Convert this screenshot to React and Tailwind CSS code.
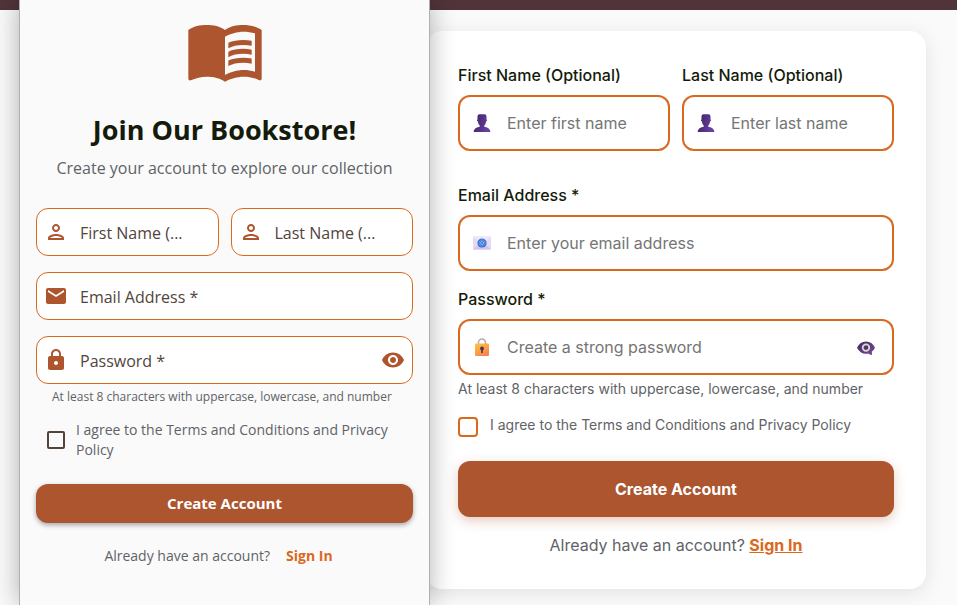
import React from "react";
import {
  MdMenuBook,
  MdOutlinePerson,
  MdEmail,
  MdLock,
  MdVisibility,
} from "react-icons/md";

function PersonEmoji() {
  return (
    <svg viewBox="0 0 18 18" className="size-[18px]" aria-hidden="true">
      <defs>
        <linearGradient id="bust" x1="0" x2="1" y1="0" y2="0.3">
          <stop offset="0" stopColor="#38225f" />
          <stop offset="1" stopColor="#6a3fa3" />
        </linearGradient>
      </defs>
      <path
        fill="url(#bust)"
        d="M4.500 2.200Q4.500.2 6.500.2h5q2 0 2 2v3.300q.6.2.5.900t-.8.900q-.3 2.700-1.900 4.300v1.100l2.800.800q2.900 1 3.300 4.500H.600q.4-3.500 3.300-4.500l2.800-.800v-1.100Q5.100 10 4.800 7.300q-.7-.2-.8-.9t.5-.9z"
      />
    </svg>
  );
}

function MailEmoji() {
  return (
    <svg viewBox="0 0 18 18" className="size-[18px]" aria-hidden="true">
      <path fill="#e6d9f3" d="M0 2.500h18v13H0z" />
      <path fill="#d3c3e6" d="M0 15.500 7 9h4l7 6.500z" />
      <path fill="#efe6f8" d="M0 2.500h18L9 11z" />
      <circle cx="9" cy="9" r="4.600" fill="#3474d4" />
      <circle cx="9" cy="9" r="1.500" fill="none" stroke="#a6c6f4" strokeWidth="0.800" />
      <path
        d="M10.600 7.500v2.200q.2 1 1 .5.700-.8.300-2A3 3 0 1 0 10.500 11.600"
        fill="none"
        stroke="#86b0ee"
        strokeWidth="0.600"
      />
    </svg>
  );
}

function LockEmoji() {
  return (
    <svg viewBox="0 0 18 18" className="size-[18px]" aria-hidden="true">
      <defs>
        <linearGradient id="padlock" x1="0" x2="0.600" y1="0" y2="1">
          <stop offset="0" stopColor="#fdc93c" />
          <stop offset="1" stopColor="#f9834f" />
        </linearGradient>
      </defs>
      <path
        d="M5.500 7V4.500a3.500 3.500 0 0 1 7 0V7"
        fill="none"
        stroke="#b3a8bd"
        strokeWidth="1.500"
      />
      <rect x="2" y="5.500" width="14" height="12.500" rx="1" fill="url(#padlock)" />
      <circle cx="9" cy="10.500" r="1.900" fill="#4a3358" />
      <path fill="#4a3358" d="M8.200 10.500h1.600v4.500H8.200z" />
    </svg>
  );
}

function EyeEmoji() {
  return (
    <svg viewBox="0 0 18 18" className="size-[18px]" aria-hidden="true">
      <defs>
        <linearGradient id="eye" x1="0" x2="1" y1="0" y2="1">
          <stop offset="0" stopColor="#412961" />
          <stop offset="1" stopColor="#7b4b9a" />
        </linearGradient>
      </defs>
      <path
        fill="url(#eye)"
        d="M0 9.800Q3 3.500 9 3.500t9 6.300q-1.200 2.500-3.200 3.900l.3 3.400q-2.500-.2-3.900-1.500-1 .2-2.200.2-6 0-9-6z"
      />
      <circle cx="9" cy="9.600" r="3.300" fill="#4a4048" stroke="#ddd6e2" strokeWidth="1.800" />
    </svg>
  );
}

function MobileField({ icon: Icon, label, type = "text", children }) {
  return (
    <div className="flex h-12 min-w-0 flex-1 items-center rounded-xl border border-[#da681d] bg-white px-[7px] text-[#ad552f]">
      <Icon size={24} className="shrink-0" />
      <input
        type={type}
        aria-label={label}
        placeholder={label}
        className="ml-3 w-full min-w-0 flex-1 bg-transparent pt-0.5 text-base text-[#52443c] outline-none placeholder:text-[#52443c]"
      />
      {children}
    </div>
  );
}

function WebField({ id, label, icon, placeholder, type = "text", children }) {
  return (
    <div className="min-w-0 flex-1">
      <label htmlFor={id} className="mb-2 block text-base font-medium text-[#141b0b]">
        {label}
      </label>
      <div className="flex h-14 items-center gap-4 rounded-xl border-2 border-[#da681d] bg-white px-[13px]">
        <span className="shrink-0">{icon}</span>
        <input
          id={id}
          type={type}
          placeholder={placeholder}
          className="w-full min-w-0 flex-1 bg-transparent text-base outline-none placeholder:text-[#757575]"
        />
        {children}
      </div>
    </div>
  );
}

function MobilePanel() {
  return (
    <section className="z-10 col-start-2 row-span-2 row-start-1 border-x border-[#b0b0b0] bg-[#fafafa] px-4 pt-2.5 font-['Open_Sans',sans-serif] text-[#5f6367] shadow-[0_0_24px_rgba(0,0,0,0.3)]">
      <MdMenuBook size={80} className="mx-auto text-[#ad552f]" />
      <h1 className="mt-[22px] text-center text-[27px] leading-9 font-bold text-[#141b0b]">
        Join Our Bookstore!
      </h1>
      <p className="mt-2 text-center text-base">
        Create your account to explore our collection
      </p>
      <form className="mt-7">
        <div className="flex gap-3">
          <MobileField icon={MdOutlinePerson} label="First Name (..." />
          <MobileField icon={MdOutlinePerson} label="Last Name (..." />
        </div>
        <div className="mt-4 flex">
          <MobileField icon={MdEmail} label="Email Address *" type="email" />
        </div>
        <div className="mt-4 flex">
          <MobileField icon={MdLock} label="Password *" type="password">
            <button type="button" aria-label="Show password">
              <MdVisibility size={24} />
            </button>
          </MobileField>
        </div>
        <p className="mt-1 px-4 text-xs leading-[18px] whitespace-nowrap">
          At least 8 characters with uppercase, lowercase, and number
        </p>
        <label className="mt-3.5 flex items-center gap-[11px] pl-[11px] text-sm leading-5">
          <input
            type="checkbox"
            className="size-[18px] shrink-0 appearance-none rounded-xs border-2 border-[#52443c] checked:bg-[#52443c]"
          />
          <span>I agree to the Terms and Conditions and Privacy Policy</span>
        </label>
        <button
          type="submit"
          className="mt-6 h-[39px] w-full rounded-xl bg-[#ad552f] text-[15px] font-bold text-white shadow-[0_2px_5px_rgba(0,0,0,0.35)]"
        >
          Create Account
        </button>
      </form>
      <p className="mt-[23px] flex justify-center gap-4 pr-3 text-sm leading-5">
        Already have an account?
        <a href="#signin" className="font-bold text-[#da681d]">
          Sign In
        </a>
      </p>
    </section>
  );
}

function WebCard() {
  return (
    <section className="col-start-3 row-start-2 mt-[21px] mr-[31px] mb-4 -ml-1 self-start rounded-2xl bg-white p-8 text-[#5f6367] shadow-[0_4px_20px_rgba(0,0,0,0.1)]">
      <form>
        <div className="flex gap-3">
          <WebField
            id="first-name"
            label="First Name (Optional)"
            icon={<PersonEmoji />}
            placeholder="Enter first name"
          />
          <WebField
            id="last-name"
            label="Last Name (Optional)"
            icon={<PersonEmoji />}
            placeholder="Enter last name"
          />
        </div>
        <div className="mt-8">
          <WebField
            id="email"
            label="Email Address *"
            icon={<MailEmoji />}
            placeholder="Enter your email address"
            type="email"
          />
        </div>
        <div className="mt-4">
          <WebField
            id="password"
            label="Password *"
            icon={<LockEmoji />}
            placeholder="Create a strong password"
            type="password"
          >
            <button type="button" aria-label="Show password" className="mr-1">
              <EyeEmoji />
            </button>
          </WebField>
        </div>
        <p className="mt-1 text-sm">
          At least 8 characters with uppercase, lowercase, and number
        </p>
        <div className="mt-4 flex gap-3">
          <input
            id="terms"
            type="checkbox"
            className="mt-0.5 size-5 shrink-0 appearance-none rounded-sm border-2 border-[#da681d] bg-white checked:bg-[#da681d]"
          />
          <label htmlFor="terms" className="text-sm">
            I agree to the Terms and Conditions and Privacy Policy
          </label>
        </div>
        <button
          type="submit"
          className="mt-6 h-14 w-full rounded-xl bg-[#ad552f] text-base font-bold text-white shadow-[0_4px_12px_rgba(173,85,47,0.3)]"
        >
          Create Account
        </button>
      </form>
      <p className="mt-4 text-center text-base">
        Already have an account?{" "}
        <a href="#signin" className="font-bold text-[#da681d] underline">
          Sign In
        </a>
      </p>
    </section>
  );
}

export default function App() {
  return (
    <main className="grid min-h-screen grid-cols-[19px_411px_1fr] grid-rows-[10px_1fr] bg-[#fafafa] font-['Inter',sans-serif]">
      <header className="col-span-3 col-start-1 row-start-1 bg-[#503439]" />
      <MobilePanel />
      <WebCard />
    </main>
  );
}
